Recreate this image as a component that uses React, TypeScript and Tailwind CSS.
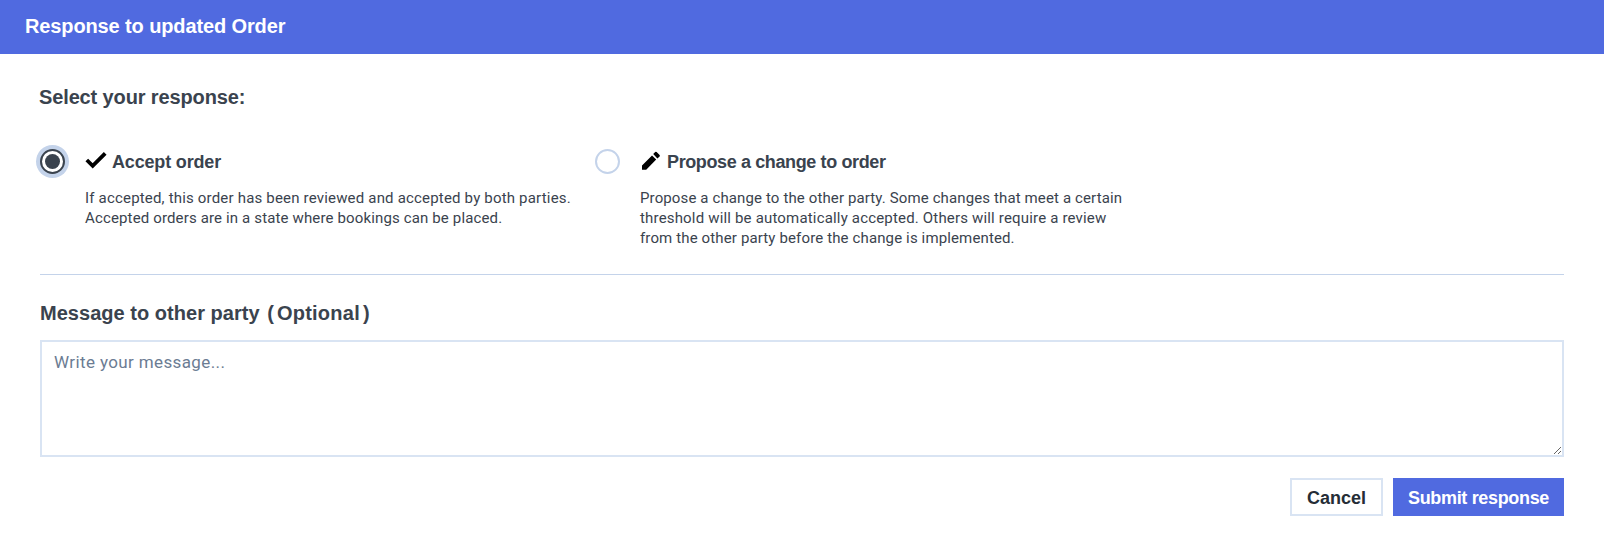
import React, { useState } from "react";

type ResponseType = "accept" | "propose";

interface ResponseOptionProps {
  value: ResponseType;
  selected: boolean;
  onSelect: (value: ResponseType) => void;
  icon: React.ReactNode;
  title: React.ReactNode;
  children: React.ReactNode;
}

const CheckIcon = () => (
  <svg className="w-[22px] h-[20px] shrink-0" viewBox="0 0 22 20" fill="none">
    <path d="M1.8 8 7.7 13.8 20.2 1.4" stroke="#000" strokeWidth="3.8" />
  </svg>
);

const PencilIcon = () => (
  <svg className="w-[22px] h-[20px] shrink-0 overflow-visible" viewBox="0 0 22 20" fill="#000">
    <path d="M2 13.4 12 3.4l4.2 4.2L6.2 17.7H2zM13.2 2.1 15.2.1q.7-.8 1.4 0l3 3q.6.7 0 1.4l-2.2 1.9z" />
  </svg>
);

const ResponseOption: React.FC<ResponseOptionProps> = ({ value, selected, onSelect, icon, title, children }) => (
  <label className="flex w-[555px] cursor-pointer">
    <input
      type="radio"
      name="response"
      className="sr-only"
      checked={selected}
      onChange={() => onSelect(value)}
    />
    <span
      className={`mt-[5px] flex size-[25px] shrink-0 items-center justify-center rounded-full border-2 bg-white ${
        selected ? "border-[#3a434e] ring-4 ring-[#c4d3ea]" : "border-[#c4d3ea]"
      }`}
    >
      {selected && <span className="size-[15px] rounded-full bg-[#3a434e]" />}
    </span>
    <div className="ml-5">
      <div className="flex h-9 items-center">
        {icon}
        <span className="ml-[5px] text-[18px] leading-6 font-bold whitespace-nowrap">{title}</span>
      </div>
      <div className="mt-2 font-['Roboto',sans-serif] text-[15px] leading-5 whitespace-nowrap">{children}</div>
    </div>
  </label>
);

export default function App() {
  const [response, setResponse] = useState<ResponseType>("accept");
  const [message, setMessage] = useState("");

  return (
    <div className="h-[556px] bg-white font-['Liberation_Sans',Arial,sans-serif] text-[#3a434e]">
      <header className="flex h-[54px] items-center bg-[#506ae0] pb-[2px] pl-[25px]">
        <h1 className="text-[20px] leading-6 font-bold tracking-[-0.12px] whitespace-nowrap text-white">
          Response to updated Order
        </h1>
      </header>

      <main className="px-10 pt-[31px]">
        <h2 className="-ml-px text-[20px] leading-6 font-bold tracking-[-0.13px]">Select your response:</h2>

        <div className="mt-[35px] flex h-[130px]">
          <ResponseOption
            value="accept"
            selected={response === "accept"}
            onSelect={setResponse}
            icon={<CheckIcon />}
            title={<span className="tracking-[-0.17px]">Accept order</span>}
          >
            <p className="tracking-[0.185px]">If accepted, this order has been reviewed and accepted by both parties.</p>
            <p className="tracking-[0.143px]">Accepted orders are in a state where bookings can be placed.</p>
          </ResponseOption>
          <ResponseOption
            value="propose"
            selected={response === "propose"}
            onSelect={setResponse}
            icon={<PencilIcon />}
            title={<span className="tracking-[-0.38px]">Propose a change to order</span>}
          >
            <p className="tracking-[0.123px]">Propose a change to the other party. Some changes that meet a certain</p>
            <p className="tracking-[0.175px]">threshold will be automatically accepted. Others will require a review</p>
            <p className="tracking-[0.133px]">from the other party before the change is implemented.</p>
          </ResponseOption>
        </div>

        <div className="h-px bg-[#c4d3ea]" />

        <h2 className="mt-[26px] text-[20px] leading-6 font-bold whitespace-nowrap">
          <span className="tracking-[0.03px]">Message to other party </span>
          <span className="mr-[3px] ml-[2px]">(</span>
          <span className="tracking-[0.25px]">Optional</span>
          <span className="ml-[3px]">)</span>
        </h2>
        <textarea
          className="mt-[15px] block h-[117px] w-full resize border-2 border-[#d9e4f3] px-3 py-2 font-['Roboto',sans-serif] text-[17px] leading-6 tracking-[0.38px] outline-none placeholder:text-[#6b7c93]"
          placeholder="Write your message..."
          value={message}
          onChange={(e) => setMessage(e.target.value)}
        />

        <div className="mt-[21px] flex justify-end gap-2.5">
          <button className="h-[38px] w-[93px] border-2 border-[#d9e4f3] bg-white pt-[2px] text-[18px] leading-6 font-bold text-[#252d36]">
            Cancel
          </button>
          <button className="h-[38px] w-[171px] bg-[#506ae0] pt-[2px] text-[18px] leading-6 font-bold tracking-[-0.33px] whitespace-nowrap text-white">
            Submit response
          </button>
        </div>
      </main>
    </div>
  );
}
